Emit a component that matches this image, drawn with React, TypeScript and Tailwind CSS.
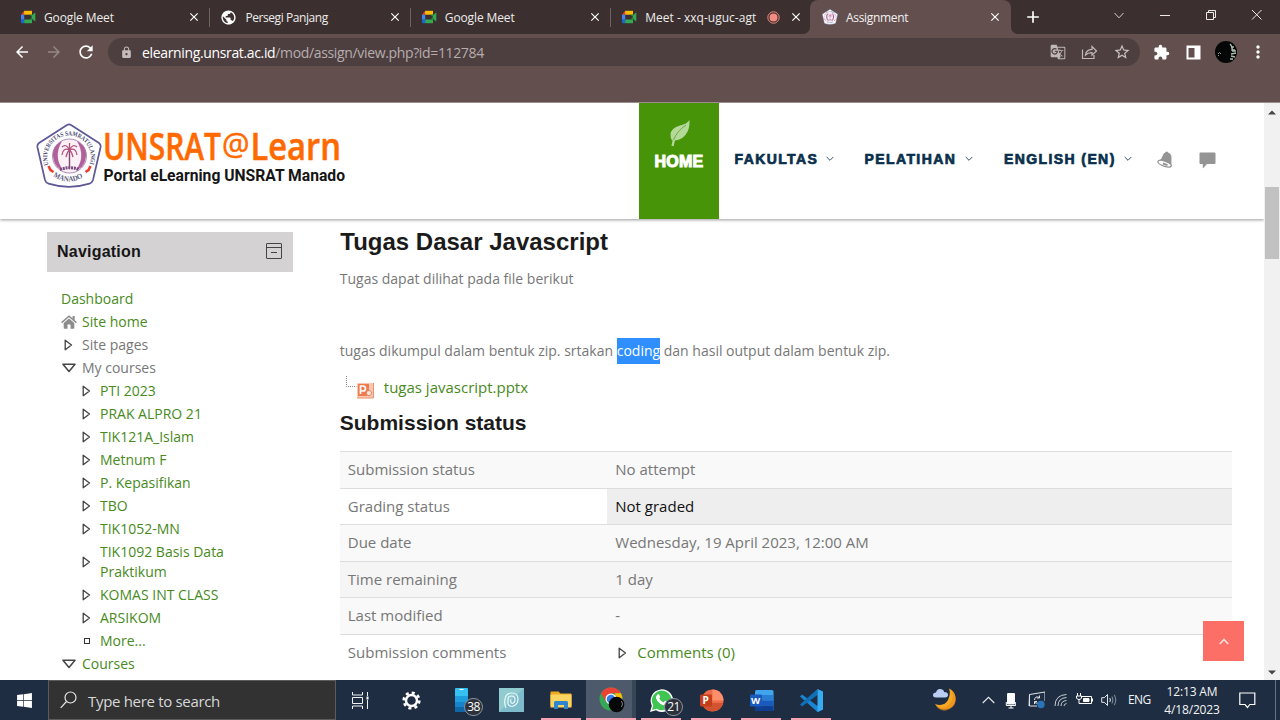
import React from "react";
import {
  MdArrowBack,
  MdArrowForward,
  MdRefresh,
  MdLock,
  MdGTranslate,
  MdStarBorder,
  MdExtension,
  MdMoreVert,
  MdPublic,
  MdClose,
  MdAdd,
} from "react-icons/md";
import { FaWindows } from "react-icons/fa";

const MeetIcon = () => (
  <svg width="16" height="16" viewBox="0 0 16 16" className="shrink-0">
    <path d="M4 1.800h8v3.900H4z" fill="#fbbc05" />
    <path d="M4.200 1.800v3.900H1z" fill="#ea4335" />
    <path d="M1 5.700h3.200v5H1z" fill="#4285f4" />
    <path d="M1 10.500h3.200v3.700H2.200Q1 14.200 1 13z" fill="#1a66d6" />
    <path d="M4.200 10.500h7.800v3.700H4.200z" fill="#34a853" />
    <path d="M9.500 5.700H12v5H9.500L12 8z" fill="#1e8e3e" />
    <path d="M12 6.200l2.600-2.300q.7-.4.7.4v7.400q0 .8-.7.400L12 9.800z" fill="#34a853" />
  </svg>
);

const Crest = ({ size }: { size: number }) => (
  <svg width={size} height={size} viewBox="0 0 66 66" className="shrink-0">
    <defs>
      <path id="crest-arc" d="M12.6 42 A21.8 21.8 0 1 1 53.4 42" />
      <path id="crest-base" d="M17 53 Q33 64 49 53" />
    </defs>
    <path
      d="M31 2 Q33 .6 35 2 L63 20 Q65 21.5 64.6 24 L57 57 Q56 60 53.5 60.6 Q33 67 12.500 60.600 Q10 60 9 57 L1.400 24 Q1 21.500 3 20 Z"
      fill="#fff"
      stroke="#5d5896"
      strokeWidth="1.7"
    />
    <text fontFamily="Liberation Serif, serif" fontWeight="700" fontSize="6.4" fill="#4a4972">
      <textPath href="#crest-arc" textLength="83" lengthAdjust="spacingAndGlyphs">UNIVERSITAS SAMRATULANGI</textPath>
    </text>
    <text fontFamily="Liberation Serif, serif" fontWeight="700" fontSize="7.5" fill="#5b5a7c">
      <textPath href="#crest-base" textLength="32" lengthAdjust="spacingAndGlyphs">MANADO</textPath>
    </text>
    <circle cx="33.500" cy="33" r="17" fill="#faf0f5" stroke="#9a74a8" strokeWidth=".8" />
    <path d="M26 18 Q14 24 18 38 Q20 45 27 47 Q17 34 26 18Z" fill="#b0609a" />
    <path d="M41 18 Q53 24 49 38 Q47 45 40 47 Q50 34 41 18Z" fill="#b0609a" />
    <path d="M33.500 27V45" stroke="#7e4b78" strokeWidth="1.400" />
    <path
      d="M33.500 27Q30 20 26 24M33.500 27Q37 20 41 24M33.500 27Q27 24 26 32M33.500 27Q40 24 41 32M33.500 27Q31 29 30 34M33.500 27Q36 29 37 34M33.500 27V20"
      stroke="#b0557f"
      strokeWidth="1.300"
      fill="none"
    />
    <path d="M24 46.500Q34 43 43 46.500" stroke="#7a4a80" strokeWidth="3" strokeDasharray="2 .8" fill="none" />
    <path d="M12.500 43l2 4 3 2M54.500 43l-2 4-3 2" stroke="#ee3d2f" strokeWidth="2.600" fill="none" />
  </svg>
);

const Close = () => <MdClose size={14} color="#fff" className="shrink-0" />;

const Tab = ({
  icon,
  title,
  cls,
  extra,
  sep = true,
}: {
  icon: React.ReactNode;
  title: string;
  cls: string;
  extra?: React.ReactNode;
  sep?: boolean;
}) => (
  <div className="flex h-[34px] w-[200.400px] shrink-0 items-center pl-[10px]">
    {icon}
    <span className={"mt-px ml-[8px] whitespace-nowrap text-[12px] text-[#efecec] " + cls}>{title}</span>
    <span className="ml-auto flex items-center gap-[9px]">
      {extra}
      <Close />
    </span>
    <span className={sep ? "ml-[8px] h-[19px] w-px bg-[#6f6462]" : "ml-[8px] h-[19px] w-px"} />
  </div>
);

const ToolbarChevron = () => (
  <svg width="10" height="7" viewBox="0 0 10 7" fill="none" stroke="#d5cfce" strokeWidth="1">
    <path d="M.5 1l4.500 4.800L9.500 1" />
  </svg>
);

const Browser = () => (
  <div className="shrink-0 bg-[#624f4e] font-['Open_Sans','Noto_Sans',sans-serif]">
    <div className="flex h-[34px] bg-[#624f4e]">
      <div className="flex w-[810px] shrink-0 overflow-hidden rounded-br-[7px] bg-[#3b302f] pl-[10px]">
        <Tab icon={<MeetIcon />} title="Google Meet" cls="tracking-[-0.120px]" />
        <Tab icon={<MdPublic size={17} color="#fff" className="shrink-0" />} title="Persegi Panjang" cls="tracking-[-0.420px]" />
        <Tab icon={<MeetIcon />} title="Google Meet" cls="tracking-[-0.120px]" />
        <Tab
          icon={<MeetIcon />}
          title="Meet - xxq-uguc-agt"
          cls="tracking-[0.020px]"
          sep={false}
          extra={
            <svg width="13" height="13" viewBox="0 0 13 13">
              <circle cx="6.500" cy="6.500" r="4" fill="#f28b82" />
              <circle cx="6.500" cy="6.500" r="5.700" fill="none" stroke="#f28b82" />
            </svg>
          }
        />
      </div>
      <div className="w-[201px] shrink-0 bg-[#3b302f]">
        <div className="flex h-full items-center rounded-t-[8px] bg-[#624f4e] pr-[9px] pl-[12px]">
          <Crest size={16} />
          <span className="mt-px ml-[8px] text-[12px] tracking-[-0.320px] text-[#f4f0f0]">Assignment</span>
          <span className="ml-auto">
            <Close />
          </span>
        </div>
      </div>
      <div className="flex flex-1 items-center rounded-bl-[7px] bg-[#3b302f] pl-[12px]">
        <MdAdd size={20} color="#fff" />
        <span className="ml-[71px] -mt-[4px]">
          <ToolbarChevron />
        </span>
        <svg width="102" height="12" viewBox="0 0 102 12" className="-mt-[5px] ml-[36px] shrink-0" fill="none" stroke="#efeaea">
          <path d="M0 6.500h10" />
          <path d="M46.500 3.500h7v7h-7zM48.500 3.500v-2h7v7h-2" />
          <path d="M92 1l9.500 9.500M101.500 1L92 10.500" />
        </svg>
      </div>
    </div>
    <div className="flex h-[68px] items-start pl-[13px]">
      <div className="flex h-[36px] w-full items-center">
        <MdArrowBack size={18} color="#fff" />
        <MdArrowForward size={18} color="#958786" className="ml-[14px]" />
        <MdRefresh size={20} color="#fff" className="ml-[13px]" />
        <div className="ml-[12px] flex h-[28px] w-[1032px] shrink-0 items-center rounded-full bg-[#4d3f40] pr-[9px] pl-[12px]">
          <MdLock size={13} color="#c4bcbc" />
          <span className="ml-[9px] text-[14px] tracking-[-0.350px] whitespace-nowrap text-[#b7adad]">
            <span className="text-white">elearning.unsrat.ac.id</span>/mod/assign/view.php?id=112784
          </span>
          <div className="ml-auto flex items-center gap-[15px]">
            <MdGTranslate size={16} color="#c0b8b8" />
            <svg width="17" height="16" viewBox="0 0 17 16" fill="none" stroke="#c0b8b8" strokeWidth="1.200">
              <path d="M1.500 5.500v9H13V11" />
              <path d="M4.500 11Q5 5.500 11 5.300V2.500L15.500 7 11 11.200V8.600Q7 8.400 4.500 11z" />
            </svg>
            <MdStarBorder size={18} color="#c9c2c2" />
          </div>
        </div>
        <MdExtension size={17} color="#fff" className="ml-[13px] shrink-0" />
        <svg width="15" height="15" viewBox="0 0 15 15" className="ml-[16px] shrink-0">
          <path fillRule="evenodd" d="M.5.5h14v14H.5zM2.500 3v9.500h6V3z" fill="#fff" />
        </svg>
        <svg width="22" height="22" viewBox="0 0 22 22" className="ml-[14px] shrink-0">
          <circle cx="11" cy="11" r="11" fill="#050606" />
          <path d="M15 3q3 3 2 6h3M17 10h4M16 13l5-1M16 15l4 1M15 18h3M16 6h3" stroke="#a9bcae" strokeWidth="1.300" fill="none" />
          <path d="M3 13l1.500-1.500L6 13M3 14l1 1" stroke="#889790" fill="none" />
        </svg>
        <MdMoreVert size={20} color="#fff" className="ml-[11px] shrink-0" />
      </div>
    </div>
  </div>
);

const NavItem = ({ label, cls }: { label: string; cls: string }) => (
  <div className={"flex items-center " + cls}>
    <span className="text-[14px] leading-[18px] font-bold tracking-[1.400px] whitespace-nowrap text-[#0a2f4c] [-webkit-text-stroke:0.700px_#0a2f4c]">
      {label}
    </span>
    <svg width="8" height="6" viewBox="0 0 8 6" className="ml-auto" fill="none" stroke="#31506a">
      <path d="M.7 1L4 4.300 7.300 1" />
    </svg>
  </div>
);

const SiteHeader = () => (
  <header className="relative z-10 flex h-[116px] shrink-0 bg-white pl-[36px] font-['Liberation_Sans',Arial,sans-serif] shadow-[0_1px_3px_rgba(0,0,0,0.400)]">
    <div className="flex pt-[20px]">
      <Crest size={66} />
      <svg width="256" height="70" viewBox="0 0 256 70" className="overflow-visible">
        <g fontFamily="Open Sans, sans-serif" fill="#ff6a00" stroke="#ff6a00" strokeWidth=".5" fontSize="38">
          <text x="1" y="36.500" textLength="118" lengthAdjust="spacingAndGlyphs" fontWeight="600">UNSRAT</text>
          <text x="120" y="32" textLength="27.500" lengthAdjust="spacingAndGlyphs" fontSize="31" fontWeight="500">@</text>
          <text x="148.500" y="36.500" textLength="90.500" lengthAdjust="spacingAndGlyphs" fontWeight="600">Learn</text>
        </g>
        <text x="1.500" y="57.500" textLength="241.500" lengthAdjust="spacingAndGlyphs" fontFamily="Roboto, sans-serif" fontWeight="700" fontSize="17" fill="#161616">
          Portal eLearning UNSRAT Manado
        </text>
      </svg>
    </div>
    <nav className="ml-auto flex w-[625px]">
      <div className="flex w-[80px] flex-col items-center bg-[#479409] pt-[16px]">
        <svg width="24" height="30" viewBox="0 0 24 30">
          <path d="M22.500 1Q20 5 13 6.500Q4 9 3.500 15.500Q3.500 19 5 21.500Q13 22 18 16.500Q23 11 22.500 1z" fill="#b4d99a" />
          <path d="M19 6Q7 14 5.500 27" stroke="#b4d99a" strokeWidth="2.200" fill="none" />
          <path d="M19 6Q10 12 6.500 21" stroke="#6fae42" strokeWidth="1" fill="none" />
        </svg>
        <span className="mt-[4px] text-[16px] leading-[18px] font-bold tracking-[0.300px] text-white [-webkit-text-stroke:1px_#fff]">HOME</span>
      </div>
      <div className="flex h-[111px] items-center pl-[15.500px]">
        <NavItem label="FAKULTAS" cls="w-[99px]" />
        <NavItem label="PELATIHAN" cls="ml-[31px] w-[108px]" />
        <NavItem label="ENGLISH (EN)" cls="ml-[31.500px] w-[128px]" />
        <svg width="16" height="18" viewBox="0 0 16 18" className="ml-[25px]">
          <path d="M8.500 2.200Q10 .8 11.200 2.600Q15 4 14.500 9L14.300 15.500L2 11Q4.500 9.500 5.500 6Q6.500 3 8.500 2.200z" fill="#949494" />
          <ellipse cx="7.600" cy="13.700" rx="7" ry="2.500" transform="rotate(19 7.600 13.700)" fill="#fff" stroke="#949494" strokeWidth="1.300" />
          <path d="M6 13.500l4.500 1.600" stroke="#949494" strokeWidth="2" />
        </svg>
        <svg width="17" height="17" viewBox="0 0 17 17" className="mt-[3px] ml-[26px]">
          <path d="M1.500.5h14q1 0 1 1v9.500q0 1-1 1H8L3.800 16.500V12H1.500q-1 0-1-1V1.500q0-1 1-1z" fill="#949494" />
        </svg>
      </div>
    </nav>
  </header>
);

const RightArrow = () => (
  <svg width="9" height="12" viewBox="0 0 9 12" className="shrink-0" fill="#fff" stroke="#444" strokeWidth="1.300" strokeLinejoin="round">
    <path d="M1.200 1.200v9.600L7.500 6z" />
  </svg>
);

const DownArrow = () => (
  <svg width="14" height="10" viewBox="0 0 14 10" className="shrink-0" fill="#fff" stroke="#444" strokeWidth="1.500" strokeLinejoin="round">
    <path d="M1 1.200h12L7 8.500z" />
  </svg>
);

const TreeRow = ({ icon, children, nested, grey }: { icon: React.ReactNode; children: React.ReactNode; nested?: boolean; grey?: boolean }) => (
  <div className={"flex items-center pt-px pb-[2px] leading-[20px] " + (nested ? "pl-[34px]" : "pl-[14px]")}>
    <span className={nested ? "flex w-[19px] justify-start pl-px" : "flex w-[21px] justify-start"}>{icon}</span>
    <span className={grey ? "text-[#777]" : "text-[#488a1c]"}>{children}</span>
  </div>
);

const courses: React.ReactNode[] = [
  "PTI 2023",
  "PRAK ALPRO 21",
  "TIK121A_Islam",
  "Metnum F",
  "P. Kepasifikan",
  "TBO",
  "TIK1052-MN",
  <>
    TIK1092 Basis Data
    <br />
    Praktikum
  </>,
  "KOMAS INT CLASS",
  "ARSIKOM",
];

const Sidebar = () => (
  <aside className="w-[246.400px] shrink-0 pt-[13px]">
    <div className="flex h-[40px] items-center justify-between bg-[#d4d2d3] pr-[10px] pl-[10px] font-['Liberation_Sans',Arial,sans-serif]">
      <span className="text-[16px] font-bold tracking-[0.220px] text-[#161616]">Navigation</span>
      <svg width="17" height="17" viewBox="0 0 17 17" className="-mt-[3px]" fill="none" stroke="#444">
        <rect x=".5" y="1.500" width="15" height="15" rx=".5" />
        <path d="M.5 5.500h15M5 10.500h6" />
      </svg>
    </div>
    <div className="pt-[15px] text-[14px]">
      <div className="h-[24px] pl-[14px] leading-[24px] text-[#488a1c]">Dashboard</div>
      <TreeRow
        icon={
          <svg width="16" height="14" viewBox="0 0 16 14" fill="#8c8c8c">
            <path d="M8 3.400l5.300 4.500v5.200q0 .6-.6.6H9.500V9.600h-3v4.100H3.300q-.6 0-.6-.6V7.900z" />
            <path d="M.6 7.600L8 1.200l7.400 6.400" fill="none" stroke="#8c8c8c" strokeWidth="1.500" />
            <path d="M11.500 1h2.200v4.500l-2.200-2z" />
          </svg>
        }
      >
        Site home
      </TreeRow>
      <TreeRow icon={<span className="pl-[3px]"><RightArrow /></span>} grey>Site pages</TreeRow>
      <TreeRow icon={<span className="pl-px"><DownArrow /></span>} grey>My courses</TreeRow>
      {courses.map((course, i) => (
        <TreeRow key={i} icon={<RightArrow />} nested>
          {course}
        </TreeRow>
      ))}
      <TreeRow icon={<span className="ml-[2px] h-[6px] w-[6px] border border-[#333]" />} nested>More...</TreeRow>
      <TreeRow icon={<span className="pl-px"><DownArrow /></span>}>Courses</TreeRow>
    </div>
  </aside>
);

const statusRows = [
  { label: "Submission status", value: "No attempt", row: "bg-[#f9f9f9]", cell: "text-[#777]" },
  { label: "Grading status", value: "Not graded", row: "bg-white", cell: "bg-[#eeeeee] text-[#111]" },
  { label: "Due date", value: "Wednesday, 19 April 2023, 12:00 AM", row: "bg-[#f9f9f9]", cell: "text-[#777]" },
  { label: "Time remaining", value: "1 day", row: "bg-[#f5f5f5]", cell: "text-[#777]" },
  { label: "Last modified", value: "-", row: "bg-[#f9f9f9]", cell: "text-[#777]" },
];

const Main = () => (
  <main className="ml-[46.400px] w-[892.200px] shrink-0 text-[#777]">
    <h2 className="mt-[8px] pl-[0.500px] font-['Liberation_Sans',Arial,sans-serif] text-[24px] leading-[30px] font-bold text-[#1b1b1b]">Tugas Dasar Javascript</h2>
    <p className="mt-[10px] text-[14px] leading-[24px]">Tugas dapat dilihat pada file berikut</p>
    <p className="mt-[47px] text-[14px] leading-[26px]">
      tugas dikumpul dalam bentuk zip. srtakan <span className="inline-block bg-[#2f8fff] text-white">coding</span> dan hasil output dalam bentuk zip.
    </p>
    <div className="mt-[9px] flex h-[28px] items-center pl-[5px]">
      <svg width="30" height="26" viewBox="0 0 30 26" className="shrink-0">
        <path d="M1.500 2v10.500h10" fill="none" stroke="#888" strokeDasharray="1 1" />
        <rect x="12" y="9" width="16.500" height="15" rx="1" fill="#f7c9b4" />
        <rect x="13" y="10" width="11" height="12" fill="#ee7a4e" />
        <path d="M15.500 20v-8h2.500q2.500 0 2.500 2.500t-2.500 2.500h-2.500" fill="none" stroke="#fff" strokeWidth="1.700" />
        <circle cx="24" cy="19" r="2.600" fill="#fbe6dc" stroke="#ec875f" />
        <path d="M28.500 9v15M12 24h16.500" stroke="#e9906c" />
      </svg>
      <span className="ml-[9px] text-[15px] text-[#488a1c]">tugas javascript.pptx</span>
    </div>
    <h3 className="mt-[9px] font-['Liberation_Sans',Arial,sans-serif] text-[21px] leading-[26px] font-bold text-[#1b1b1b]">Submission status</h3>
    <div className="mt-[15px] text-[15px]">
      {statusRows.map((r) => (
        <div key={r.label} className={"flex h-[36.600px] border-t border-[#ddd] leading-[34px] " + r.row}>
          <div className="w-[267.500px] pl-[8px]">{r.label}</div>
          <div className={"flex-1 pl-[8px] " + r.cell}>{r.value}</div>
        </div>
      ))}
      <div className="flex h-[46px] border-t border-[#ddd] leading-[34px]">
        <div className="w-[267.500px] pl-[8px]">Submission comments</div>
        <div className="flex h-[34px] items-center pl-[11px] text-[#488a1c]">
          <span className="pt-[3px]">
            <RightArrow />
          </span>
          <span className="ml-[10px]">Comments (0)</span>
        </div>
      </div>
    </div>
  </main>
);

const Scrollbar = () => (
  <div className="flex w-[16px] shrink-0 flex-col items-center bg-[#f1f1f1] pt-[7px] pb-[5px]">
    <svg width="8" height="5" viewBox="0 0 8 5">
      <path d="M0 4.500h8L4 .5z" fill="#444" />
    </svg>
    <div className="mt-[72px] h-[72px] w-[14px] bg-[#c1c1c1]" />
    <svg width="8" height="5" viewBox="0 0 8 5" className="mt-auto">
      <path d="M0 .5h8L4 4.500z" fill="#444" />
    </svg>
  </div>
);

const AppSlot = ({ children, active, running }: { children: React.ReactNode; active?: boolean; running?: boolean }) => (
  <div className={"flex h-[40px] w-[50px] shrink-0 flex-col items-center justify-between " + (active ? "bg-gradient-to-r from-[#4d5a6c] from-[92%] to-[#384658] to-[92%]" : "")}>
    <div className="relative flex h-[38px] w-full items-center justify-center pt-[2px]">{children}</div>
    <div className={"h-[2px] " + (running ? (active ? "w-full bg-[#f8a3b2]" : "w-[40px] bg-[#f8a3b2]") : "w-0")} />
  </div>
);

const Count = ({ n }: { n: string }) => (
  <span className="absolute top-[18px] left-[28px] flex h-[18px] w-[19px] items-center justify-center rounded-full border border-[#8b929b] bg-[#2c323b] text-[12px] leading-none tracking-[-0.500px] text-white">
    {n}
  </span>
);

const Taskbar = () => (
  <footer className="flex h-[40px] shrink-0 items-center overflow-hidden bg-[#1e2d41] font-['Open_Sans','Noto_Sans',sans-serif] text-[#f2f4f6]">
    <div className="flex w-[48px] justify-center">
      <FaWindows size={17} color="#fff" />
    </div>
    <div className="flex h-[40px] w-[288px] shrink-0 items-center border border-[#5c5c5e] bg-[#323233] pl-[11px]">
      <svg width="17" height="18" viewBox="0 0 17 18" fill="none" stroke="#e8e8e8" strokeWidth="1.200">
        <circle cx="10.500" cy="6.500" r="5.500" />
        <path d="M6.500 10.500L.7 16.800" />
      </svg>
      <span className="mt-[2px] ml-[11px] text-[15px] tracking-[-0.320px] text-[#d8d8d8]">Type here to search</span>
    </div>
    <svg width="17" height="17" viewBox="0 0 17 17" className="ml-[16px] shrink-0" fill="none" stroke="#f0f2f4">
      <path d="M.5 0v3h10V0M.5 17v-3h10v3M.5 5.500h10v6H.5zM15.500 0v4M15.500 8v9" />
      <path d="M14.500 4.500h2v3h-2z" fill="#fff" stroke="none" />
    </svg>
    <div className="flex w-[67px] justify-center pl-[17px]">
      <svg width="19" height="19" viewBox="0 0 20 20" className="shrink-0" fill="none" stroke="#fff">
        <circle cx="10" cy="10" r="5.800" strokeWidth="2.600" />
        <circle cx="10" cy="10" r="8.200" strokeWidth="2.800" strokeDasharray="3.220 3.220" />
      </svg>
    </div>
    <div className="flex">
      <AppSlot>
        <svg width="15" height="24" viewBox="0 0 15 24">
          <rect x="1" width="13" height="24" rx="1" fill="#35c1f1" />
          <path d="M1 8h13v6H1z" fill="#1f9ddd" />
          <path d="M1 14h13v5H1z" fill="#1683cb" />
          <path d="M1 19h13v5H1z" fill="#0f67a8" />
          <path d="M5.500 1.500h4" stroke="#fff" />
        </svg>
        <Count n="38" />
      </AppSlot>
      <AppSlot>
        <svg width="25" height="24" viewBox="0 0 25 24">
          <rect width="25" height="24" fill="#7fbccb" />
          <path d="M0 0h25L0 24z" fill="#8fcbcf" />
          <path d="M7 20Q5 16 6 11Q7 5 13 5Q19 5 19 11Q19 17 13 18.500Q10 18.500 9 16V11Q9 8 12.500 8Q16 8 16 11.500Q16 15 13 15.500Q11.500 15 11.700 11.500" fill="none" stroke="#e9f8fa" strokeWidth="1.200" />
        </svg>
      </AppSlot>
      <AppSlot running>
        <svg width="22" height="20" viewBox="0 0 22 20">
          <path d="M.5 2.500q0-1 1-1h7l2 2H21q.5 0 .5.700V16H.5z" fill="#f0a91e" />
          <path d="M.5 4.500h21v13H.5z" fill="#fcd462" />
          <path d="M4 19v-6.500q0-1.500 1.500-1.500h11q1.500 0 1.500 1.500V19h-4v-4H8v4z" fill="#2f86cf" />
        </svg>
      </AppSlot>
      <AppSlot active running>
        <svg width="26" height="26" viewBox="0 0 26 26" className="ml-[2px]">
          <circle cx="12" cy="12" r="11.500" fill="#34a853" />
          <path d="M2 6.300A11.500 11.500 0 0 1 22 6.300H12L7 14.800z" fill="#ea4335" />
          <path d="M22 6.300Q25 13 21 19L12 23.500L17 14.500L16 6.300z" fill="#fbbc05" />
          <circle cx="12" cy="12" r="5.500" fill="#fff" />
          <circle cx="12" cy="12" r="4.300" fill="#3b7de8" />
          <circle cx="17.500" cy="17.500" r="7.800" fill="#060708" />
          <path d="M22.500 14q2 3 0 6" stroke="#7b8480" fill="none" />
        </svg>
      </AppSlot>
      <AppSlot running>
        <svg width="25" height="25" viewBox="0 0 25 25">
          <path d="M1 24l1.800-6.300A11.300 11.300 0 1 1 7 22.300z" fill="#fff" />
          <path d="M3 22l1.300-4.600A9.800 9.800 0 1 1 7.700 20.800z" fill="#3fc551" />
          <path d="M8.500 6.500q1-1 1.700.2l1 2.200q0 .6-1 1.700 1.500 2.800 4.300 4l1.400-1.500q.4-.4 1 0l2.200 1.200q.5.500 0 1.600-1.300 2-3.500 1.600-6.500-1.500-8.600-7.200Q6.600 8 8.500 6.500z" fill="#fff" />
        </svg>
        <Count n="21" />
      </AppSlot>
      <AppSlot running>
        <svg width="25" height="23" viewBox="0 0 25 23">
          <circle cx="13.500" cy="11.500" r="11" fill="#ed6c47" />
          <path d="M13.500.5a11 11 0 0 1 11 11h-11z" fill="#ff8f6b" />
          <path d="M3 14h21.200a11 11 0 0 1-20 3z" fill="#d35230" />
          <rect x="1" y="5.500" width="12" height="12" rx="1" fill="#c43e1c" />
          <text x="3.600" y="15" fontFamily="Open Sans, sans-serif" fontWeight="700" fontSize="10" fill="#fff">P</text>
        </svg>
      </AppSlot>
      <AppSlot running>
        <svg width="25" height="23" viewBox="0 0 25 23">
          <rect x="6" y="1" width="18.500" height="21" rx="1.500" fill="#41a5ee" />
          <path d="M6 6h18.500v5.500H6z" fill="#2b7cd3" />
          <path d="M6 11.500h18.500v5H6z" fill="#185abd" />
          <path d="M6 16.500h18.500V21q0 1-1 1H7q-1 0-1-1z" fill="#103f91" />
          <rect x="1" y="5.500" width="12" height="12" rx="1" fill="#185abd" />
          <text x="2" y="15" fontFamily="Open Sans, sans-serif" fontWeight="700" fontSize="9.500" fill="#fff">W</text>
        </svg>
      </AppSlot>
      <AppSlot running>
        <svg width="25" height="25" viewBox="0 0 25 25">
          <path d="M3 6.500L1 8.500 18.500 24l5.500-2.500v-18L18.500 18z" fill="#1a86d2" />
          <path d="M18.500 1v6L3 18.500 1 16.500z" fill="#0f70b8" />
          <path d="M18.500 1L24 3.500v18L18.500 24z" fill="#38acf2" />
        </svg>
      </AppSlot>
    </div>
    <svg width="26" height="26" viewBox="0 0 26 26" className="ml-auto shrink-0">
      <path d="M17 1.500A11 11 0 1 1 3 17Q12 20 16 13Q19 7 17 1.500z" fill="#f6a823" />
      <path d="M20 4Q23 14 14 20Q9 22 4 19Q8 24.500 14 23.500Q26 20 23 9z" fill="#ea8a1c" opacity=".6" />
      <path d="M4 10.500q-3 0-3-2.500T4 5.500Q5 1.500 8.500 2T12 5q4 0 4 2.800t-3 2.700z" fill="#b9cdf5" />
    </svg>
    <div className="ml-[24px] flex w-[136px] shrink-0 items-center justify-between">
      <svg width="13" height="8" viewBox="0 0 13 8" fill="none" stroke="#e8ebee" strokeWidth="1.100">
        <path d="M.7 7l5.800-5.700L12.300 7" />
      </svg>
      <svg width="13" height="17" viewBox="0 0 13 17" fill="#fff">
        <rect x="4" y="1" width="8" height="11.500" rx="1" />
        <path d="M3.300 10v3.500h9.400V10M8 13v3M5.500 16h5" stroke="#fff" fill="none" />
      </svg>
      <svg width="20" height="18" viewBox="0 0 20 18" fill="none" stroke="#dfe4e8">
        <path d="M12 15H4.500V3.500L20 1v9M4.500 3.500L4 15" />
        <path d="M14.500 6.500Q10 4.500 9.500 9M9.500 11.500q3 2 5.500-1M14.500 4.500v2.500H12M9.500 13v-2.500H12" />
        <circle cx="16" cy="13.500" r="3.700" fill="#2a74b8" stroke="none" />
      </svg>
      <svg width="14" height="14" viewBox="0 0 14 14" fill="none" stroke="#c8ced5">
        <path d="M2 13Q2 2 13.500 1.500M5 13Q5 5 13.500 4.500M8 13q0-5 5.500-5.500M11 13q0-2 2.500-2.500" />
      </svg>
      <svg width="17" height="14" viewBox="0 0 17 14" fill="none" stroke="#fff">
        <path d="M6 3.500h9.500v7H6M1.500 0v3M4.500 0v3M.5 3h5v2q-.5 1.500-2.500 1.500T.5 5zM3 6.500v4h3M16.500 5.500v3" />
        <path d="M7.500 5.500h5.500v3H7.500z" fill="#fff" />
      </svg>
      <svg width="17" height="14" viewBox="0 0 17 14" fill="none" stroke="#e4e8ec">
        <path d="M.7 4.700h2.600L6.500 1.500v11L3.300 9.300H.7zM8.800 5q1.200 2 0 4" />
        <path d="M11 3.500q2 3.500 0 7M13.500 1.800q2.800 5.200 0 10.400" stroke="#8893a0" />
      </svg>
    </div>
    <span className="ml-[10px] w-[24px] text-[12px] tracking-[-0.600px]">ENG</span>
    <div className="mt-px ml-[10px] w-[60px] text-center text-[12px] leading-[18px] tracking-[-0.150px] whitespace-nowrap">
      12:13 AM
      <br />
      4/18/2023
    </div>
    <svg width="17" height="17" viewBox="0 0 17 17" className="ml-[17px] shrink-0" fill="none" stroke="#fff" strokeWidth="1.200">
      <path d="M.8 1h15v11.500h-5L8.500 15.500 6 12.500H.8z" />
    </svg>
    <div className="mr-[4px] ml-[19px] h-full w-px bg-[#66717f]" />
  </footer>
);

export default function App() {
  return (
    <div className="flex h-[720px] w-[1280px] flex-col overflow-hidden bg-white">
      <Browser />
      <div className="h-px shrink-0 bg-[#9a8c8b]" />
      <div className="flex h-[577px] shrink-0">
        <div className="relative flex w-[1264px] flex-col overflow-hidden font-['Open_Sans','Noto_Sans',sans-serif]">
          <SiteHeader />
          <div className="flex h-[461px] overflow-hidden pl-[47px]">
            <Sidebar />
            <Main />
          </div>
          <button className="absolute top-[518px] left-[1203px] flex h-[40px] w-[41px] items-center justify-center bg-[#fb6f66]">
            <svg width="10" height="7" viewBox="0 0 10 7" fill="none" stroke="#ffe0dc" strokeWidth="1.600">
              <path d="M.8 6L5 1.500 9.200 6" />
            </svg>
          </button>
        </div>
        <Scrollbar />
      </div>
      <Taskbar />
    </div>
  );
}
